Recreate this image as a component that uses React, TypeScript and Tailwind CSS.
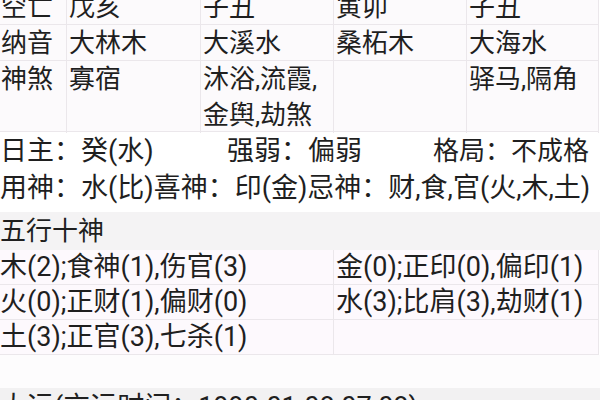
const FONT = "font-['Roboto','Noto_Sans_CJK_SC',sans-serif]";

const topRows: { label: string; cells: string[][]; h: string }[] = [
  { label: '空亡', cells: [['戊亥'], ['子丑'], ['寅卯'], ['子丑']], h: 'h-[36px]' },
  { label: '纳音', cells: [['大林木'], ['大溪水'], ['桑柘木'], ['大海水']], h: 'h-[36px]' },
  {
    label: '神煞',
    cells: [['寡宿'], ['沐浴,流霞,', '金舆,劫煞'], [], ['驿马,隔角']],
    h: 'h-[71px]',
  },
];

const wuxing: [string, string][] = [
  ['木(2);食神(1),伤官(3)', '金(0);正印(0),偏印(1)'],
  ['火(0);正财(1),偏财(0)', '水(3);比肩(3),劫财(1)'],
  ['土(3);正官(3),七杀(1)', ''],
];

export default function App() {
  return (
    <div className={`h-[400px] w-[600px] overflow-hidden bg-white text-[26px] leading-[36px] text-[#1f1f1f] ${FONT}`}>
      {/* pillar table, scrolled so the first row is cut */}
      <div className="-mt-[11px] w-[599px] bg-[#fcfafc]">
        {topRows.map((row) => (
          <div
            key={row.label}
            className={`grid grid-cols-[66px_134px_133px_133px_133px] border-b border-[#ebe7eb] ${row.h}`}
          >
            <div className="whitespace-nowrap pl-[1px]">{row.label}</div>
            {row.cells.map((lines, i) => (
              <div key={i} className="whitespace-nowrap border-l border-[#ebe7eb] pl-[2px] last:border-r">
                {lines.map((l) => (
                  <div key={l}>{l}</div>
                ))}
              </div>
            ))}
          </div>
        ))}
      </div>

      {/* day master summary */}
      <div className="bg-white pt-[1px] pb-[5px] text-[27px] leading-[37px]">
        <div className="flex whitespace-nowrap">
          <span className="w-[227px]">日主：癸(水)</span>
          <span className="w-[206px]">强弱：偏弱</span>
          <span className="text-[26px]">格局：不成格</span>
        </div>
        <div className="whitespace-nowrap">用神：水(比)喜神：印(金)忌神：财,食,官(火,木,土)</div>
      </div>

      {/* five elements / ten gods */}
      <div className="h-[38px] bg-[#f4f3f4] leading-[38px]">五行十神</div>
      <div className="w-[599px] bg-[#fdf9fd] text-[27px]">
        {wuxing.map(([a, b]) => (
          <div key={a} className="grid h-[35px] grid-cols-[333px_1fr] border-b border-[#ebe7eb] leading-[34px]">
            <div className="whitespace-nowrap">{a}</div>
            <div className="whitespace-nowrap border-l border-r border-[#ebe7eb] pl-[2px]">{b}</div>
          </div>
        ))}
      </div>

      <div className="h-[33px] bg-[#fdfcfd]" />
      <div className="h-[40px] whitespace-nowrap bg-[#f2f1f2] pt-[1px] text-[27px] leading-[37px]">
        大运(交运时间：1990-01-08 07:08)
      </div>
    </div>
  );
}
